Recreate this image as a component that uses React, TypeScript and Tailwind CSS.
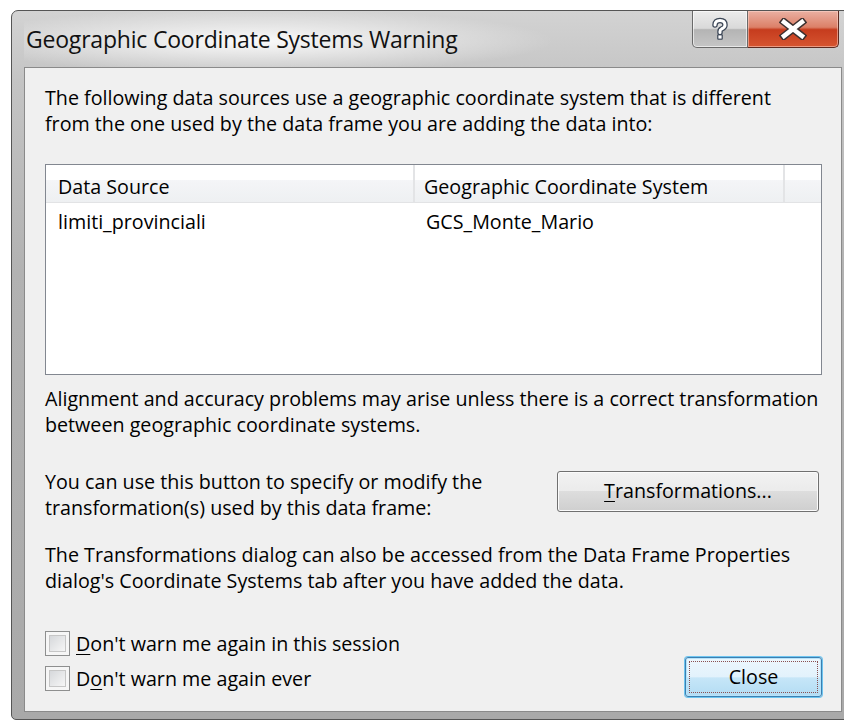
import React from "react";

function HelpGlyph() {
  return (
    <svg width="22" height="24" viewBox="0 0 22 24">
      <path
        d="M6 8 Q6 3.5 11 3.5 Q16 3.5 16 8 Q16 10.5 12.5 12 Q11 12.7 11 14.5 L11 15.5"
        fill="none"
        stroke="#3b4656"
        strokeWidth="5.5"
        strokeLinecap="round"
      />
      <rect x="8.2" y="17.2" width="5.6" height="5.6" rx="1" fill="#3b4656" />
      <path
        d="M6 8 Q6 3.5 11 3.5 Q16 3.5 16 8 Q16 10.5 12.5 12 Q11 12.7 11 14.5 L11 15.5"
        fill="none"
        stroke="#ffffff"
        strokeWidth="3"
        strokeLinecap="round"
      />
      <rect x="9.4" y="18.4" width="3.2" height="3.2" fill="#ffffff" />
    </svg>
  );
}

function CloseGlyph() {
  return (
    <svg width="28" height="22" viewBox="0 0 28 22">
      <path
        d="M5 4 L23 18 M23 4 L5 18"
        stroke="#3b3030"
        strokeWidth="7.5"
        strokeLinecap="square"
      />
      <path
        d="M5 4 L23 18 M23 4 L5 18"
        stroke="#ffffff"
        strokeWidth="4.5"
        strokeLinecap="square"
      />
    </svg>
  );
}

function CheckBox({ label }: { label: React.ReactNode }) {
  return (
    <label className="flex h-[35px] items-center gap-[6px]">
      <span className="flex h-[25px] w-[25px] border border-[#8e8f8f] bg-[#f6f6f6] p-[3px]">
        <span className="h-full w-full border border-[#c6c6c6] bg-[linear-gradient(135deg,#d6d8db,#f6f6f6)]" />
      </span>
      <span>{label}</span>
    </label>
  );
}

export default function App() {
  return (
    <div className="h-[720px] w-[844px] overflow-hidden bg-white pl-[11px] pt-[10px] font-['Open_Sans',sans-serif] text-black">
      {/* window frame */}
      <div className="flex h-[710px] w-[860px] flex-col rounded-t-[7px] rounded-b-[5px] border border-[#555] bg-[linear-gradient(to_bottom,#d3d3d3_0px,#c4c4c4_70px,#b2b2b2_260px,#a9a9a9_100%)] px-[12px] pb-[7px]">
        {/* caption */}
        <div className="flex h-[56px] w-[818px] items-start bg-[radial-gradient(ellipse_300px_32px_at_230px_30px,rgba(255,255,255,0.9),rgba(255,255,255,0))]">
          <span className="ml-[2px] mt-[13px] text-[23px] leading-[30px] tracking-[-0.2px] text-[#111]">
            Geographic Coordinate Systems Warning
          </span>
          <div className="ml-auto mr-[3px] flex">
            <div className="flex h-[37px] w-[56px] items-center justify-center rounded-bl-[5px] border border-t-0 border-[#6a6a6a] bg-[linear-gradient(to_bottom,#ececec_0%,#d9d9d9_48%,#b4b4b4_52%,#c6c6c6_100%)] shadow-[inset_0_0_0_1px_rgba(255,255,255,0.6)]">
              <HelpGlyph />
            </div>
            <div className="flex h-[37px] w-[91px] items-center justify-center rounded-br-[5px] border border-l-0 border-t-0 border-[#5e2a20] bg-[linear-gradient(to_bottom,#eab0a2_0%,#dc8068_45%,#c63c1e_52%,#d65530_100%)] shadow-[inset_0_0_0_1px_rgba(255,220,210,0.5)]">
              <CloseGlyph />
            </div>
          </div>
        </div>

        {/* client area */}
        <div className="flex h-[645px] w-[818px] flex-col border border-[#8a8a8a] bg-[#f0f0f0] pb-[14px] pl-[20px] pr-[19px] pt-[17px] text-[19.7px] leading-[26px]">
          <p className="whitespace-nowrap">
            The following data sources use a geographic coordinate system that is different
            <br />
            from the one used by the data frame you are adding the data into:
          </p>

          {/* list view */}
          <div className="mt-[27px] h-[211px] border border-[#828790] bg-white">
            <div className="flex h-[38px] border-b border-[#e2e3e5] bg-[linear-gradient(to_bottom,#ffffff_0%,#ffffff_40%,#f4f5f7_42%,#eef0f2_100%)]">
              <div className="flex w-[369px] items-center border-r-2 border-[#e3e4e6] pl-[12px] pt-[6px]">
                Data Source
              </div>
              <div className="flex w-[370px] items-center border-r-2 border-[#e3e4e6] pl-[9px] pt-[6px]">
                Geographic Coordinate System
              </div>
              <div className="flex-1" />
            </div>
            <div className="flex h-[36px] items-center pt-[2px]">
              <div className="w-[369px] pl-[12px]">limiti_provinciali</div>
              <div className="pl-[11px]">GCS_Monte_Mario</div>
            </div>
          </div>

          <p className="mt-[11px] whitespace-nowrap">
            Alignment and accuracy problems may arise unless there is a correct transformation
            <br />
            between geographic coordinate systems.
          </p>

          <div className="mt-[31px] flex items-center justify-between">
            <p className="whitespace-nowrap">
              You can use this button to specify or modify the
              <br />
              transformation(s) used by this data frame:
            </p>
            <button className="mb-[8px] mr-[3px] h-[41px] w-[262px] rounded-[3px] border border-[#707070] bg-[linear-gradient(to_bottom,#f2f2f2_0%,#ebebeb_50%,#dddddd_50%,#cfcfcf_100%)] shadow-[inset_0_0_0_1px_#fbfbfb]">
              <span className="underline underline-offset-[3px]">T</span>ransformations...
            </button>
          </div>

          <p className="mt-[21px] whitespace-nowrap">
            The Transformations dialog can also be accessed from the Data Frame Properties
            <br />
            dialog's Coordinate Systems tab after you have added the data.
          </p>

          <div className="mt-auto flex items-end justify-between">
            <div className="mb-[1px] flex flex-col">
              <CheckBox
                label={
                  <>
                    <span className="underline underline-offset-[3px]">D</span>on't warn me again in this session
                  </>
                }
              />
              <CheckBox
                label={
                  <>
                    D<span className="underline underline-offset-[3px]">o</span>n't warn me again ever
                  </>
                }
              />
            </div>
            <button className="relative h-[40px] w-[137px] rounded-[3px] border border-[#3c7fb1] bg-[linear-gradient(to_bottom,#edf7fd_0%,#e2f2fc_50%,#c6e6f8_52%,#b3dcf3_100%)] shadow-[0_0_0_1px_#6ec5f0,inset_0_0_0_1px_#b8e4fa]">
              <span className="pointer-events-none absolute inset-[3px] border border-dotted border-[#8a5050]" />
              Close
            </button>
          </div>
        </div>
      </div>
    </div>
  );
}
